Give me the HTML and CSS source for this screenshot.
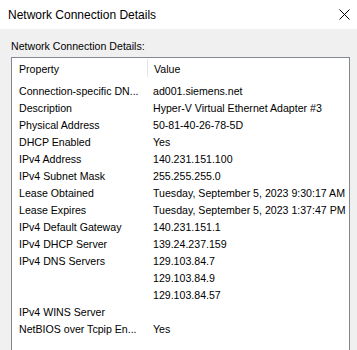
FILE: index.html
```html
<!DOCTYPE html>
<html lang="en">

<head>
    <meta charset="UTF-8">
    <title>Network Connection Details</title>
    <link rel="stylesheet" href="styles.css">
</head>

<body>
    <div class="titlebar">
        <span class="title">Network Connection Details</span>
        <svg class="close" width="11" height="11" viewBox="0 0 11 11">
            <path d="M0.5 0.5 L10.5 10.5 M10.5 0.5 L0.5 10.5" stroke="#000" stroke-width="1" fill="none"/>
        </svg>
    </div>

    <div class="content">
        <div class="label">Network Connection Details:</div>

        <div class="listbox">
            <div class="row header">
                <div class="cell prop">Property</div>
                <div class="cell val">Value</div>
            </div>
            <div class="row"><div class="cell prop">Connection-specific DN...</div><div class="cell val">ad001.siemens.net</div></div>
            <div class="row"><div class="cell prop">Description</div><div class="cell val">Hyper-V Virtual Ethernet Adapter #3</div></div>
            <div class="row"><div class="cell prop">Physical Address</div><div class="cell val">50-81-40-26-78-5D</div></div>
            <div class="row"><div class="cell prop">DHCP Enabled</div><div class="cell val">Yes</div></div>
            <div class="row"><div class="cell prop">IPv4 Address</div><div class="cell val">140.231.151.100</div></div>
            <div class="row"><div class="cell prop">IPv4 Subnet Mask</div><div class="cell val">255.255.255.0</div></div>
            <div class="row"><div class="cell prop">Lease Obtained</div><div class="cell val">Tuesday, September 5, 2023 9:30:17 AM</div></div>
            <div class="row"><div class="cell prop">Lease Expires</div><div class="cell val">Tuesday, September 5, 2023 1:37:47 PM</div></div>
            <div class="row"><div class="cell prop">IPv4 Default Gateway</div><div class="cell val">140.231.151.1</div></div>
            <div class="row"><div class="cell prop">IPv4 DHCP Server</div><div class="cell val">139.24.237.159</div></div>
            <div class="row"><div class="cell prop">IPv4 DNS Servers</div><div class="cell val">129.103.84.7</div></div>
            <div class="row"><div class="cell prop"></div><div class="cell val">129.103.84.9</div></div>
            <div class="row"><div class="cell prop"></div><div class="cell val">129.103.84.57</div></div>
            <div class="row"><div class="cell prop">IPv4 WINS Server</div><div class="cell val"></div></div>
            <div class="row"><div class="cell prop">NetBIOS over Tcpip En...</div><div class="cell val">Yes</div></div>
        </div>
    </div>
</body>

</html>
```

FILE: styles.css
```css
/* General Page Styles */
html,
body {
    height: 350px;
    overflow: hidden;
}

body {
    margin: 0;
    padding: 0;
    font-family: 'Liberation Sans', Arial, sans-serif;
    color: #000;
    background-color: #f0f0f0;
}

/* Title bar */
.titlebar {
    height: 29px;
    background-color: #fff;
    display: flex;
    align-items: center;
    justify-content: space-between;
    padding: 0 7px 0 8px;
}

.title {
    font-size: 12px;
}

.close {
    display: block;
}

/* Dialog body */
.content {
    padding: 11px 7px 0 11px;
}

.label {
    font-size: 10.6px;
    line-height: 13px;
    margin-bottom: 4px;
}

/* List view */
.listbox {
    border: 1px solid #828790;
    border-bottom: none;
    background-color: #fff;
    height: 293px;
    font-size: 10.6px;
}

.row {
    display: flex;
    height: 17px;
    line-height: 17px;
}

.row.header {
    height: 25px;
    line-height: 23px;
}

.cell {
    white-space: nowrap;
    overflow: hidden;
}

.prop {
    width: 128px;
    padding-left: 7px;
}

.val {
    flex: 1;
    padding-left: 6px;
}

.header .prop {
    border-right: 1px solid #e5e5e5;
    height: 18px;
    margin-top: 1px;
    line-height: 20px;
    overflow: visible;
}

.header .val {
    line-height: 22px;
}
```
